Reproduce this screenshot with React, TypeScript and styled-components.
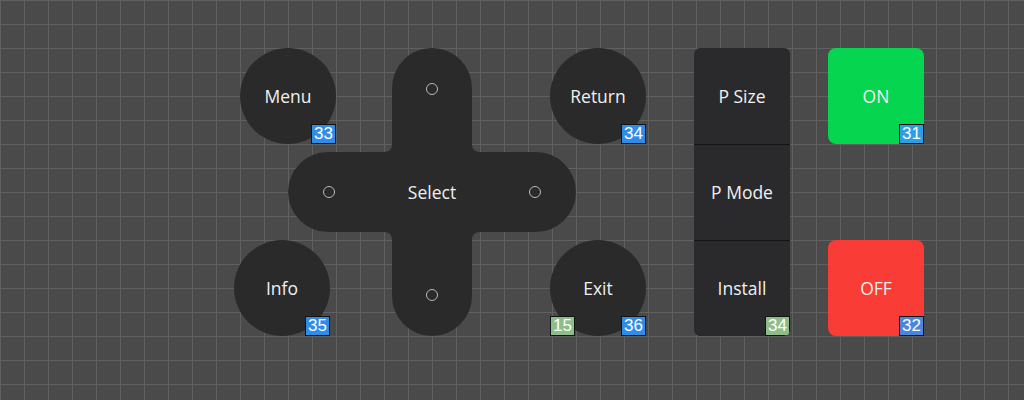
import React from "react";
import styled, { createGlobalStyle } from "styled-components";

const Global = createGlobalStyle`
  html, body { margin: 0; padding: 0; }
  body {
    width: 1024px;
    height: 400px;
    overflow: hidden;
    background-color: #4a4a4a;
    background-image:
      linear-gradient(to right, #606060 1px, transparent 1px),
      linear-gradient(to bottom, #606060 1px, transparent 1px);
    background-size: 24px 24px;
    font-family: "Open Sans", "Noto Sans", sans-serif;
  }
`;

const Remote = styled.div`
  display: flex;
  align-items: flex-start;
  padding: 48px 0 0 240px;
`;

const Column = styled.div<{ $shift?: number }>`
  display: flex;
  flex-direction: column;
  gap: 96px;
  width: 96px;
  margin-left: ${(p) => p.$shift ?? 0}px;
`;

const Label = styled.span`
  color: #f0f0f0;
  font-size: 17.5px;
  line-height: 1;
  padding-top: 1px;
`;

const RoundKey = styled.div<{ $dx?: number }>`
  position: relative;
  width: 96px;
  height: 96px;
  border-radius: 50%;
  background: #2a2a2b;
  display: flex;
  align-items: center;
  justify-content: center;
  margin-left: ${(p) => p.$dx ?? 0}px;
`;

const SquareKey = styled.div<{ $bg: string }>`
  position: relative;
  width: 96px;
  height: 96px;
  border-radius: 8px;
  background: ${(p) => p.$bg};
  display: flex;
  align-items: center;
  justify-content: center;
`;

const Badge = styled.span<{ $bg: string; $left?: boolean }>`
  position: absolute;
  bottom: 0;
  ${(p) => (p.$left ? "left: 0;" : "right: 0;")}
  box-sizing: border-box;
  width: 25px;
  height: 20px;
  border: 1px solid #141414;
  background: ${(p) => p.$bg};
  color: #fff;
  font-family: "Liberation Sans", Arial, sans-serif;
  font-size: 17px;
  line-height: 18px;
  text-align: center;
`;

const Dpad = styled.div`
  display: grid;
  width: 288px;
  height: 288px;
  margin-left: -48px;
  & > * {
    grid-area: 1 / 1;
  }
`;

const DpadCenter = styled.div`
  display: flex;
  align-items: center;
  justify-content: center;
`;

const Panel = styled.div`
  position: relative;
  width: 96px;
  margin-left: 48px;
  border-radius: 6px;
  background: #2a2a2c;
  overflow: hidden;
  display: flex;
  flex-direction: column;
`;

const PanelRow = styled.div`
  height: 96px;
  display: flex;
  align-items: center;
  justify-content: center;
  & + & {
    border-top: 1px solid #141414;
    height: 95px;
  }
`;

const Ring = ({ cx, cy }: { cx: number; cy: number }) => (
  <circle cx={cx} cy={cy} r={5.5} fill="none" stroke="#b8b8b8" strokeWidth={1} />
);

export default function App() {
  return (
    <>
      <Global />
      <Remote>
        <Column>
          <RoundKey>
            <Label>Menu</Label>
            <Badge $bg="#2f8ce8">33</Badge>
          </RoundKey>
          <RoundKey $dx={-6}>
            <Label>Info</Label>
            <Badge $bg="#2f8ce8">35</Badge>
          </RoundKey>
        </Column>
        <Dpad>
          <svg width="288" height="288" viewBox="0 0 288 288">
            <path
              d="M 104 40 A 40 40 0 0 1 184 40 L 184 96 Q 184 104 192 104 L 248 104 A 40 40 0 0 1 248 184 L 192 184 Q 184 184 184 192 L 184 248 A 40 40 0 0 1 104 248 L 104 192 Q 104 184 96 184 L 40 184 A 40 40 0 0 1 40 104 L 96 104 Q 104 104 104 96 Z"
              fill="#2a2a2b"
            />
            <Ring cx={144} cy={41} />
            <Ring cx={41} cy={144} />
            <Ring cx={247} cy={144} />
            <Ring cx={144} cy={247} />
          </svg>
          <DpadCenter>
            <Label>Select</Label>
          </DpadCenter>
        </Dpad>
        <Column $shift={-26}>
          <RoundKey>
            <Label>Return</Label>
            <Badge $bg="#2f8ce8">34</Badge>
          </RoundKey>
          <RoundKey>
            <Label>Exit</Label>
            <Badge $bg="#8dbd88" $left>
              15
            </Badge>
            <Badge $bg="#2f8ce8">36</Badge>
          </RoundKey>
        </Column>
        <Panel>
          <PanelRow>
            <Label>P Size</Label>
          </PanelRow>
          <PanelRow>
            <Label>P Mode</Label>
          </PanelRow>
          <PanelRow>
            <Label>Install</Label>
          </PanelRow>
          <Badge $bg="#8dbd88">34</Badge>
        </Panel>
        <Column $shift={38}>
          <SquareKey $bg="#06d54f">
            <Label>ON</Label>
            <Badge $bg="#2d9ee6">31</Badge>
          </SquareKey>
          <SquareKey $bg="#f93c35">
            <Label>OFF</Label>
            <Badge $bg="#4a86de">32</Badge>
          </SquareKey>
        </Column>
      </Remote>
    </>
  );
}
